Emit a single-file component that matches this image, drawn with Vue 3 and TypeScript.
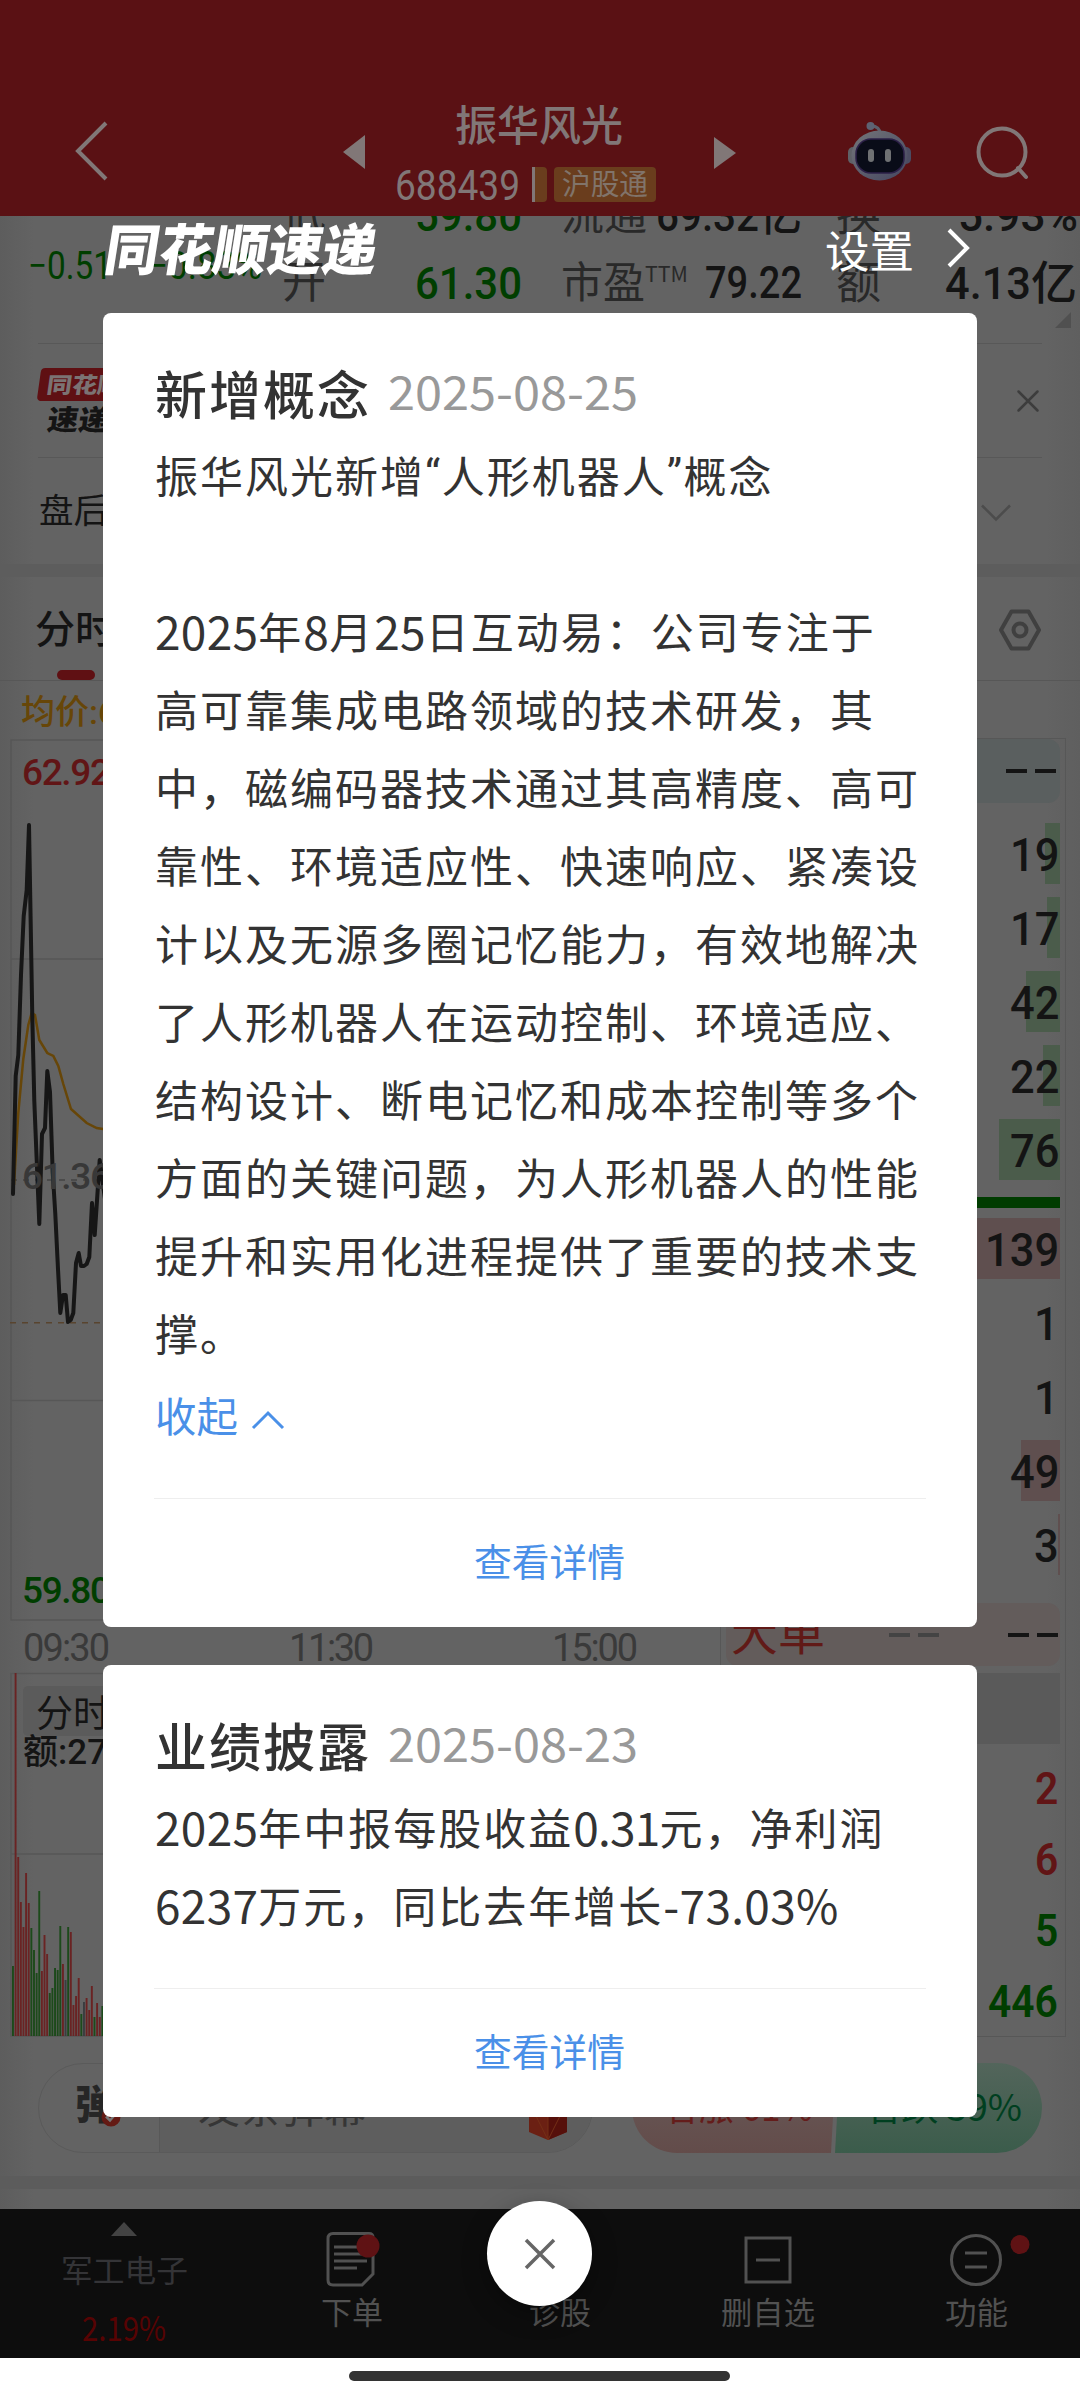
<script setup lang="ts">
import { h } from 'vue'

interface FitProps { t: string; w: number; size: number; weight?: number }

// One line of text condensed or stretched to a fixed width.
const Fit = (p: FitProps) =>
  h('svg', { width: p.w, height: p.size, class: 'fit' }, [
    h('text', {
      x: 0,
      y: p.size * 0.865,
      fill: 'currentColor',
      'font-size': p.size,
      'font-weight': p.weight ?? 400,
      textLength: p.w,
      lengthAdjust: 'spacingAndGlyphs',
    }, p.t),
  ])
Fit.props = ['t', 'w', 'size', 'weight']

interface Card { title: string; date: string; lines: string[]; expandable: boolean }

const cards: Card[] = [
  {
    title: '新增概念',
    date: '2025-08-25',
    expandable: true,
    lines: [
      '振华风光新增“人形机器人”概念',
      '',
      '2025年8月25日互动易：公司专注于',
      '高可靠集成电路领域的技术研发，其',
      '中，磁编码器技术通过其高精度、高可',
      '靠性、环境适应性、快速响应、紧凑设',
      '计以及无源多圈记忆能力，有效地解决',
      '了人形机器人在运动控制、环境适应、',
      '结构设计、断电记忆和成本控制等多个',
      '方面的关键问题，为人形机器人的性能',
      '提升和实用化进程提供了重要的技术支',
      '撑。',
    ],
  },
  {
    title: '业绩披露',
    date: '2025-08-23',
    expandable: false,
    lines: ['2025年中报每股收益0.31元，净利润', '6237万元，同比去年增长-73.03%'],
  },
]

const kindOf = (s: string) => {
  if (/^[“”]$/.test(s)) return 'quote'
  if (/^\d+\.\d+$/.test(s)) return 'num dec'
  return /^[0-9.%-]+$/.test(s) ? 'num' : 'han'
}
const pieces = (line: string) =>
  line.split(/([0-9.%-]+|[“”])/).filter(Boolean).map((s) => ({ s, kind: kindOf(s) }))

const sells = [
  { n: '19', w: 15 }, { n: '17', w: 13 }, { n: '42', w: 34 }, { n: '22', w: 17 }, { n: '76', w: 61 },
]
const buys = [
  { n: '139', w: 110 }, { n: '1', w: 0 }, { n: '1', w: 0 }, { n: '49', w: 39 }, { n: '3', w: 2 },
]
const ticks = [
  { n: '2', c: 'up' }, { n: '6', c: 'up' }, { n: '5', c: 'down' }, { n: '446', c: 'down' },
]

// Volume bars: direction and height in pixels.
const tint: Record<string, string> = { g: '#1c4a1a', r: '#6a2323', k: '#3a3d40' }
const volume = (
  'g70 r363 r179 r134 r109 r163 r133 g108 g86 g63 g145 r65 r101 r82 g43 g48 g68 g66 g110 r72 k56 g109 r104 ' +
  'r31 r40 r58 g22 k34 r38 r26 r50 g19 r33 r19 g30'
).split(' ').map((b, i) => ({ fill: tint[b[0]], v: Number(b.slice(1)), x: 12 + i * 2.63 }))
</script>

<template>
  <div class="screen">
    <header class="top">
      <svg class="back" width="34" height="60" viewBox="0 0 34 60"><path d="M31 2 3 30 31 58" /></svg>
      <svg class="prev" width="22" height="34"><path d="M22 0v34L0 17z" /></svg>
      <div class="stock">
        <Fit t="振华风光" :w="168" :size="42" :weight="500" />
        <div class="code">
          <Fit class="din" t="688439" :w="125" :size="42" />
          <i class="tag-cut"></i>
          <span class="tag"><Fit t="沪股通" :w="86" :size="29" /></span>
        </div>
      </div>
      <svg class="next" width="22" height="32"><path d="M0 0v32L22 16z" /></svg>
      <svg class="robot" width="64" height="60" viewBox="0 0 64 60">
        <defs>
          <linearGradient id="shell" x1="0" y1="0" x2="1" y2="1">
            <stop offset="0" stop-color="#737579" /><stop offset="1" stop-color="#454660" />
          </linearGradient>
        </defs>
        <path d="M23 4q9 0 9 8" fill="none" stroke="#5d5f6b" stroke-width="3" />
        <circle cx="22.500" cy="4" r="4" fill="#5d6272" />
        <rect x="0" y="25" width="12" height="17" rx="5" fill="#5f6167" />
        <rect x="51" y="25" width="12" height="17" rx="5" fill="#4b4c62" />
        <ellipse cx="31.500" cy="33.500" rx="28" ry="25" fill="url(#shell)" />
        <rect x="8" y="17" width="48" height="34" rx="15" fill="#090c18" stroke="#2c2048" stroke-width="1.500" />
        <rect x="20" y="27" width="6" height="13" rx="3" fill="#6f7173" />
        <rect x="37" y="27" width="6" height="13" rx="3" fill="#6f7173" />
      </svg>
      <svg class="search" width="54" height="54" viewBox="0 0 54 54">
        <circle cx="26" cy="26" r="23.500" /><path d="m42 42 8 9" />
      </svg>
    </header>

    <section class="stats">
      <div class="change din">
        <Fit t="−0.51" :w="84" :size="39" /><Fit t="−0.83%" :w="114" :size="39" />
      </div>
      <div class="cells">
        <span class="k"><Fit t="低" :w="44" :size="44" /></span>
        <span class="din down"><Fit t="59.80" :w="107" :size="45" :weight="500" /></span>
        <span class="k"><Fit t="流通" :w="86" :size="43" /></span>
        <span class="mix"><Fit class="din" t="69.32" :w="103" :size="45" :weight="500" /><Fit t="亿" :w="43" :size="45" :weight="500" /></span>
        <span class="k last"><Fit t="换" :w="45" :size="45" /></span>
        <span class="mix"><Fit class="din" t="5.93%" :w="120" :size="45" :weight="500" /></span>
        <span class="k"><Fit t="开" :w="44" :size="44" /></span>
        <span class="din down"><Fit t="61.30" :w="107" :size="45" :weight="500" /></span>
        <span class="k"><Fit t="市盈" :w="84" :size="43" /><Fit class="ttm" t="TTM" :w="43" :size="22" /></span>
        <span class="mix"><Fit class="din" t="79.22" :w="97" :size="44" :weight="500" /></span>
        <span class="k last"><Fit t="额" :w="45" :size="45" /></span>
        <span class="mix amount"><Fit class="din" t="4.13" :w="86" :size="45" :weight="500" /><Fit t="亿" :w="46" :size="46" :weight="500" /></span>
      </div>
      <i class="corner"></i>
    </section>

    <section class="express">
      <div class="logo">
        <div class="logo-top"><Fit t="同花顺" :w="76" :size="22" :weight="900" /></div>
        <div class="logo-bot"><Fit t="速递" :w="62" :size="28" :weight="900" /></div>
      </div>
      <svg width="22" height="22" viewBox="0 0 22 22"><path d="m1.500 1.500 19 19M20.500 1.500l-19 19" /></svg>
    </section>

    <section class="after">
      <Fit t="盘后" :w="69" :size="34" />
      <svg class="chev" width="30" height="18" viewBox="0 0 30 18"><path d="m1 1.500 14 14 14-14" /></svg>
    </section>

    <section class="tabs">
      <div class="tab"><Fit t="分时" :w="80" :size="39" :weight="500" /><i></i></div>
      <svg width="44" height="42" viewBox="0 0 44 42">
        <path d="M13.500 2.500h17L41 21 30.500 39.500h-17L3 21z" /><circle cx="22" cy="21" r="6.500" />
      </svg>
    </section>

    <main class="market">
      <svg class="chart" width="720" height="1356" viewBox="0 681 720 1356">
        <g class="grid">
          <path d="M720 740H11v880h709M11 959h709M11 1400.500h709M720 1673.500H11V2036h709M11 1854h709" />
          <path d="M11 1180h709" stroke-dasharray="6 6" stroke="#444" />
        </g>
        <path d="M10 1322.700h709" stroke="#59442e" stroke-width="1.500" stroke-dasharray="6 6" fill="none" />
        <text x="21" y="724" class="avg">均价:61.10</text>
        <text x="22" y="785" class="axis up" textLength="89">62.92</text>
        <text x="22" y="1603" class="axis down" textLength="89">59.80</text>
        <path class="avg-line" d="M14 1185 18.300 1113 23.300 1059 28.300 1025 31.700 1013 35 1015 39.300 1040 47.300 1053 53.300 1056 58.300 1066 63.300 1084 71 1109 86.700 1123 96.700 1128 103 1129 120 1131" />
        <path class="price" d="M13 1194 15.700 1076 18.300 1055 21 975 23.700 916 26.700 890 29 825 30.700 924 32.300 1017 34.300 1101 36.700 1160 39.300 1224 42 1134 45 1128 47.300 1071 50 1092 52.700 1172 55.300 1214 58 1269 60.300 1313 63 1295 65.700 1295 68 1322 70.700 1320 73.300 1313 76 1263 78.700 1253 81 1266 84 1266 86.700 1264 89.300 1257 92 1203 94.700 1235 99.700 1160 103 1185 108 1220" />
        <text x="22" y="1189" class="axis mid" textLength="89">61.36</text>
        <text x="23" y="1661" class="time" textLength="87">09:30</text>
        <text x="289" y="1661" class="time" textLength="85">11:30</text>
        <text x="552" y="1661" class="time" textLength="86">15:00</text>
        <rect v-for="(b, i) in volume" :key="i" :x="b.x" :y="2036 - b.v" width="1.900" :height="b.v" :fill="b.fill" />
        <rect x="23" y="1686" width="120" height="50" rx="5" fill="#5b5b5b" />
        <text x="36" y="1727" font-size="37" fill="#141414">分时</text>
        <text x="23" y="1764" font-size="35" font-weight="500" fill="#141414">额:<tspan class="din">2766万</tspan></text>
      </svg>

      <div class="book">
        <div class="book-head"><i></i><i></i></div>
        <div class="levels sell">
          <div class="level" v-for="(r, i) in sells" :key="i">
            <span class="depth" :style="{ width: r.w + 'px' }"></span>
            <Fit class="qty" :t="r.n" :w="r.n.length * 24.700" :size="47" :weight="500" />
          </div>
        </div>
        <div class="ratio"></div>
        <div class="levels buy">
          <div class="level" v-for="(r, i) in buys" :key="i">
            <span class="depth" :style="{ width: r.w + 'px' }"></span>
            <Fit class="qty" :t="r.n" :w="r.n.length * 24.700" :size="47" :weight="500" />
          </div>
        </div>
        <div class="big"><Fit t="大单" :w="94" :size="45" /><i class="dim"></i><i class="dim"></i><i class="gap"></i><i></i></div>
        <div class="sub"></div>
        <div class="tick" v-for="(t, i) in ticks" :key="'t' + i" :class="t.c"><Fit :t="t.n" :w="t.n.length * 23.300" :size="45" :weight="600" /></div>
      </div>
    </main>

    <section class="social">
      <div class="danmu">
        <div class="toggle">
          <Fit t="弹" :w="40" :size="40" :weight="900" />
          <svg width="20" height="20" viewBox="0 0 20 20"><circle cx="10" cy="10" r="9.500" fill="#641a14" /><path d="m5 9.500 4 4 6-7" fill="none" stroke="#777" stroke-width="2.500" /></svg>
        </div>
        <div class="field">
          <Fit t="发条弹幕" :w="168" :size="41" />
          <svg width="42" height="56" viewBox="0 0 42 56">
            <path d="M2 20h38v28L21 56 2 48z" fill="#6b2013" /><path d="m21 22 19-2v28L21 56z" fill="#56100b" />
            <path d="m4 22 17 34M21 20v36M38 22 21 56" stroke="#742f17" stroke-width="1" />
          </svg>
        </div>
      </div>
      <div class="vote">
        <div class="rise"><Fit t="看涨 61%" :w="150" :size="37" /></div>
        <div class="fall"><Fit t="看跌 39%" :w="158" :size="37" /></div>
      </div>
    </section>
    <div class="band"></div>

    <nav class="nav">
      <div class="sector">
        <svg width="26" height="14"><path d="M13 0l13 14H0z" fill="#434343" /></svg>
        <Fit t="军工电子" :w="127" :size="31" />
        <Fit class="pct" t="2.19%" :w="84" :size="34" />
      </div>
      <div class="item">
        <svg width="52" height="56" viewBox="0 0 52 56">
          <path d="M7 1.500h36q4 0 4 4V42L36 53H7q-5 0-5-5V6.500q0-5 5-5zM8 15h26M8 22h30M8 29h33M8 36h23" />
          <circle cx="42" cy="14" r="11.500" class="dot" />
        </svg>
        <Fit t="下单" :w="62" :size="31" />
      </div>
      <div class="item"><svg width="52" height="56"></svg><Fit t="诊股" :w="62" :size="31" /></div>
      <div class="item">
        <svg width="52" height="56" viewBox="0 0 52 56"><path d="M4 6h44v44H4zM14 28h24" /></svg>
        <Fit t="删自选" :w="94" :size="31" />
      </div>
      <div class="item">
        <svg width="52" height="56" viewBox="0 0 52 56">
          <circle cx="26" cy="28" r="24.500" /><path d="M15 21h22M15 35h22" />
          <circle cx="70" cy="12.500" r="9.500" class="dot" />
        </svg>
        <Fit t="功能" :w="63" :size="31" />
      </div>
    </nav>
    <footer class="home"><i></i></footer>

    <div class="modal">
      <div class="modal-head">
        <div class="brand"><Fit t="同花顺速递" :w="272" :size="55" :weight="900" /></div>
        <div class="set">
          <Fit t="设置" :w="89" :size="44" />
          <svg width="24" height="40" viewBox="0 0 24 40"><path d="m3 2 18 18L3 38" /></svg>
        </div>
      </div>
      <article class="card" v-for="c in cards" :key="c.title">
        <div class="card-head"><h2>{{ c.title }}</h2><Fit :t="c.date" :w="250" :size="46" /></div>
        <p v-for="(l, i) in c.lines" :key="i"><span v-for="(s, j) in pieces(l)" :key="j" :class="s.kind">{{ s.s }}</span></p>
        <div class="fold" v-if="c.expandable">
          <Fit t="收起" :w="83" :size="41" />
          <svg width="34" height="20" viewBox="0 0 34 20"><path d="M2 18 17 3l15 15" /></svg>
        </div>
        <div class="more"><Fit t="查看详情" :w="151" :size="38" /></div>
      </article>
    </div>
    <button class="close"><svg width="32" height="32" viewBox="0 0 32 32"><path d="m2 2 28 28M30 2 2 30" /></svg></button>
  </div>
</template>

<style>
body { margin: 0; }
</style>

<style scoped>
.screen {
  position: relative;
  width: 1080px;
  height: 2400px;
  overflow: hidden;
  display: flex;
  flex-direction: column;
  background: linear-gradient(90deg, #5d5d5d, #636363 34px, #636363 1046px, #5f5f5f);
  color: #141414;
  font-family: "Noto Sans CJK SC", sans-serif;
}
.screen > * { flex: none; box-sizing: border-box; }
svg { display: block; overflow: visible; flex: none; fill: none; }
i { display: block; flex: none; }
.din { font-family: Roboto, "Noto Sans CJK SC", sans-serif; }
.up { color: #611516; fill: #611516; }
.down { color: #003e00; fill: #003e00; }

.top { height: 216px; background: #5a1114; display: flex; color: #817777; }
.top > svg { fill: currentColor; }
.top .back { margin: 121px 0 0 75px; fill: none; stroke: #817777; stroke-width: 4; }
.prev { margin: 135px 0 0 234px; }
.stock { width: 349px; padding-top: 105px; display: flex; flex-direction: column; align-items: center; }
.stock > .fit { margin-left: -2px; }
.code { display: flex; align-items: center; height: 35px; margin-top: 20px; align-self: flex-start; margin-left: 30px; }
.tag-cut { width: 12px; height: 35px; margin-left: 12px; background: #6a3d1d; border-left: 3px solid #817777; border-radius: 0 4px 4px 0; }
.tag { height: 35px; margin-left: 7px; width: 102px; background: #6a3d1d; border-radius: 4px; display: flex; justify-content: center; align-items: center; color: #81746a; }
.next { margin: 137px 0 0 0; }
.robot { margin: 122px 0 0 112px; }
.top .search { margin: 126px 0 0 64px; fill: none; stroke: #817777; stroke-width: 4; stroke-linecap: round; }

.stats { height: 127px; position: relative; display: flex; overflow: hidden; }
.change { width: 282px; padding: 29px 0 0 28px; display: flex; gap: 36px; color: #003e00; box-sizing: border-box; flex: none; }
.cells { display: grid; flex: none; grid-template-columns: 133px 146px 84px 157px 77px 199px; grid-template-rows: 68px 68px; margin-top: -36px; width: 796px; }
.cells span { display: flex; align-items: center; }
.k { color: #292929; }
.k.last { padding-left: 34px; }
.ttm { margin-top: -16px; }
.mix { justify-content: flex-end; }
.amount { padding-right: 1px; }
.corner { position: absolute; right: 9px; top: 96px; border: 8px solid transparent; border-right-color: #505050; border-bottom-color: #505050; }

.express { height: 115px; margin: 0 38px; border-top: 1.500px solid #585858; border-bottom: 1.500px solid #585858; display: flex; justify-content: space-between; padding: 24px 3px 0 1px; }
.express > svg { margin-top: 22px; stroke: #3d3d3d; stroke-width: 2.500; stroke-linecap: round; }
.logo-top { width: 130px; height: 33px; background: #5f1013; border-radius: 4px; transform: skewX(-8deg); display: flex; align-items: center; padding-left: 8px; box-sizing: border-box; color: #7b7373; }
.logo-bot { padding: 5px 0 0 9px; transform: skewX(-8deg); }

.after { height: 106px; display: flex; justify-content: space-between; padding: 36px 69px 0 39px; }
.after .chev { margin-top: 10px; stroke: #4c4c4c; stroke-width: 2.500; }
.tabs { height: 117px; border-top: 13px solid #5d5d5d; border-bottom: 1.500px solid #575757; display: flex; justify-content: space-between; padding: 32px 38px 0 35px; }
.tab i { width: 38px; height: 10px; border-radius: 5px; background: #5f1013; margin: 22px 0 0 22px; }
.tabs > svg { stroke: #404040; stroke-width: 4; stroke-linejoin: round; }

.market { height: 1356px; display: flex; }
.chart { font-family: Roboto, "Noto Sans CJK SC", sans-serif; }
.grid { stroke: #575757; stroke-width: 1.500; }
.avg { font-size: 34px; font-weight: 500; fill: #674608; }
.axis { font-size: 37px; font-weight: 500; }
.mid { fill: #383838; }
.time { font-size: 38px; fill: #3a3a3a; }
.avg-line { stroke: #674608; stroke-width: 2.500; }
.price { stroke: #161616; stroke-width: 4; stroke-linejoin: round; stroke-linecap: round; }

.book { width: 346px; margin-top: 57px; border: 1.500px solid #575757; height: 1299px; box-sizing: border-box; padding: 0 5px; flex: none; }
.book i { width: 21px; height: 4px; background: #141414; }
.book-head { height: 64px; margin-bottom: 20px; background: #5a5f5f; border-radius: 0 12px 12px 0; display: flex; justify-content: flex-end; align-items: center; gap: 8px; padding-right: 4px; }
.levels { display: flex; flex-direction: column; gap: 13px; }
.level { height: 61px; display: flex; justify-content: flex-end; align-items: center; position: relative; }
.qty { position: relative; font-family: Roboto, sans-serif; margin-right: 1px; }
.depth { position: absolute; right: 0; top: 0; height: 61px; }
.sell .depth { background: #4b5c4b; }
.buy .depth { background: #5f4f4f; }
.ratio { height: 11px; background: #003c00; margin: 17px 0 10px; }
.big { height: 63px; margin-top: 28px; background: #635c5b; border-radius: 12px; display: flex; align-items: center; gap: 8px; padding: 0 4px 0 5px; color: #611a17; }
.big .dim { background: #444; }
.big svg + .dim { margin-left: 56px; }
.big .gap { width: 0; margin-left: 53px; }
.big i:last-child { box-shadow: 29px 0 #141414; }
.sub { height: 71px; margin: 7px 0 8px; background: #5a5a5a; }
.tick { height: 71px; display: flex; justify-content: flex-end; align-items: center; padding-right: 2px; font-family: Roboto, sans-serif; }

.social { height: 139px; padding: 26px 38px 0; display: flex; justify-content: space-between; }
.danmu { width: 555px; height: 90px; box-sizing: border-box; border: 1.500px solid #5a5a5a; border-radius: 45px; overflow: hidden; display: flex; }
.toggle { width: 121px; padding: 20px 0 0 36px; box-sizing: border-box; display: flex; border-right: 1.500px solid #585858; color: #262626; flex: none; }
.toggle svg + svg { margin: 23px 0 0 -14px; }
.field { flex: 1; background: #5e5e5e; display: flex; justify-content: space-between; padding: 24px 23px 0 38px; color: #363636; }
.field svg + svg { margin-top: -4px; }
.vote { width: 410px; height: 90px; display: flex; border-radius: 45px; overflow: hidden; }
.vote > div { padding-top: 26px; box-sizing: border-box; }
.rise { width: 204px; padding-left: 31px; background: linear-gradient(#685b5a, #634c4a); color: #641d1b; clip-path: polygon(0 0, 100% 0, calc(100% - 5px) 100%, 0 100%); }
.fall { flex: 1; margin-left: -1px; padding-left: 29px; background: linear-gradient(#53655b, #3b5c4b); color: #003f20; clip-path: polygon(5px 0, 100% 0, 100% 100%, 0 100%); }
.band { height: 13px; background: #5c5c5c; margin-bottom: 20px; }

.nav { height: 149px; background: #0d0d0d; display: flex; color: #515151; }
.sector { width: 248px; display: flex; flex-direction: column; align-items: center; padding-top: 13px; color: #343437; }
.sector .fit { margin-top: 19px; }
.sector .pct { margin-top: 26px; color: #570303; }
.item { width: 208px; display: flex; flex-direction: column; align-items: center; padding-top: 23px; }
.item > svg:first-child { stroke: #515151; stroke-width: 3; }
.item .fit { margin-top: 9px; }
.item .dot { fill: #5f1214; stroke: none; }
.home { height: 42px; background: #fff; display: flex; justify-content: center; padding: 13px 2px 0 0; }
.home i { width: 381px; height: 10px; border-radius: 5px; background: #333; }

.modal { position: absolute; left: 103px; top: 216px; width: 874px; }
.modal-head { height: 97px; display: flex; justify-content: space-between; color: #fff; }
.brand { transform: skewX(-9deg); padding: 6px 0 0 0; }
.set { display: flex; padding: 14px 7px 0 0; }
.set > svg + svg { margin: -2px 0 0 32px; stroke: #fff; stroke-width: 4; }
.card { background: #fff; border-radius: 8px; padding: 41px 51px 0; margin-bottom: 38px; color: #333; }
.card + .card { margin: 0; }
.card-head { display: flex; align-items: center; height: 78px; color: #999; }
h2 { margin: 0 17px 0 1px; font-size: 52px; line-height: 78px; font-weight: 500; letter-spacing: 2px; color: #333; }
.card p { margin: 0 0 0 1px; height: 78px; line-height: 78px; font-size: 43px; letter-spacing: 2px; white-space: nowrap; display: flex; }
.num { font-size: 46px; letter-spacing: .3px; }
.dec { letter-spacing: -.8px; }
.quote { font-family: Roboto, sans-serif; letter-spacing: 1.500px; }
.card-head + p { margin-top: 3px; }
.fold { display: flex; align-items: center; box-sizing: border-box; height: 86px; padding: 7px 0 0 1px; color: #4a90e8; }
.fold svg + svg { margin: 4px 0 0 13px; stroke: #4a90e8; stroke-width: 3; }
.more { border-top: 1.500px solid #eee; margin-top: 41px; height: 129px; box-sizing: border-box; padding: 44px 0 0 18px; display: flex; justify-content: center; align-items: flex-start; color: #4a90e8; }
p + .more { margin-top: 45px; }

.close { position: absolute; left: 487px; top: 2201px; width: 105px; height: 105px; border: 0; border-radius: 50%; background: #fff; box-shadow: 0 8px 24px rgba(0, 0, 0, .35); display: flex; align-items: center; justify-content: center; padding: 0; }
.close svg { stroke: #666; stroke-width: 3.500; }
</style>
